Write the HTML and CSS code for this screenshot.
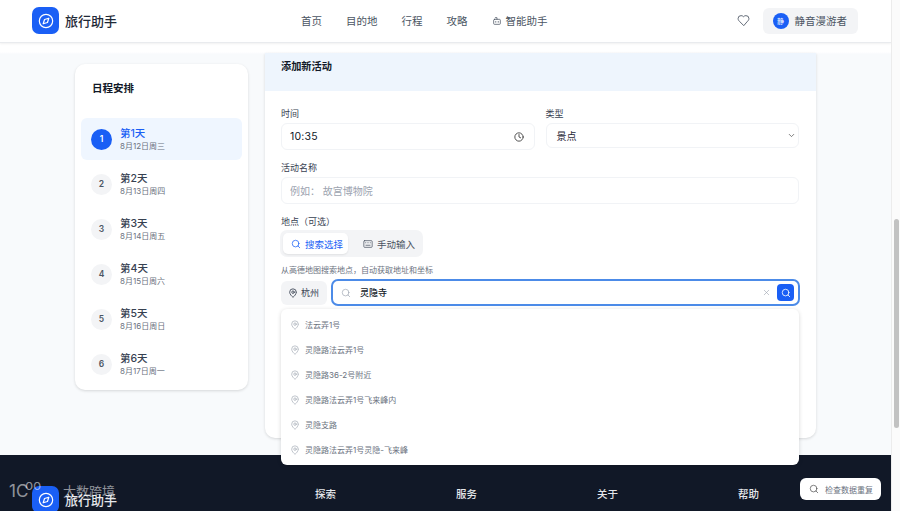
FILE: index.html
```html
<!DOCTYPE html>
<html lang="zh-CN">
<head>
    <meta charset="UTF-8">
    <meta name="viewport" content="width=device-width, initial-scale=1.0">
    <title>旅行助手</title>
    <link rel="stylesheet" href="styles.css">
</head>
<body>
    <svg class="icon-defs" width="0" height="0">
        <symbol id="i-search" viewBox="0 0 24 24"><circle cx="11" cy="11" r="8"/><path d="m21 21-4.3-4.3"/></symbol>
        <symbol id="i-pin" viewBox="0 0 24 24"><path d="M20 10c0 5-5.5 10.2-7.4 11.8a1 1 0 0 1-1.2 0C9.5 20.2 4 15 4 10a8 8 0 0 1 16 0"/><circle cx="12" cy="10" r="3"/></symbol>
        <symbol id="i-compass" viewBox="0 0 24 24"><circle cx="12" cy="12" r="10"/><path d="m16.2 7.8-2 6.4-6.4 2 2-6.4z"/></symbol>
    </svg>

    <div class="page">
        <header class="topbar">
            <div class="brand">
                <span class="brand-mark"><svg class="ico"><use href="#i-compass"/></svg></span>
                <span class="brand-name">旅行助手</span>
            </div>
            <nav class="nav">
                <a>首页</a>
                <a>目的地</a>
                <a>行程</a>
                <a>攻略</a>
                <a class="nav-ai">
                    <svg class="ico" viewBox="0 0 24 24"><path d="M12 8V4H8"/><rect x="4" y="8" width="16" height="12" rx="2"/><path d="M9 13v2"/><path d="M15 13v2"/></svg>
                    智能助手
                </a>
            </nav>
            <div class="top-right">
                <svg class="ico heart" viewBox="0 0 24 24"><path d="M19 14c1.49-1.46 3-3.21 3-5.5A5.5 5.5 0 0 0 16.5 3c-1.76 0-3 .5-4.5 2-1.5-1.5-2.74-2-4.5-2A5.5 5.5 0 0 0 2 8.5c0 2.3 1.5 4.05 3 5.5l7 7Z"/></svg>
                <div class="user">
                    <span class="avatar">静</span>
                    <span>静音漫游者</span>
                </div>
            </div>
        </header>

        <main class="content">
            <aside class="days">
                <h2>日程安排</h2>
                <div class="day active"><span class="num">1</span><div><b>第1天</b><small>8月12日周三</small></div></div>
                <div class="day"><span class="num">2</span><div><b>第2天</b><small>8月13日周四</small></div></div>
                <div class="day"><span class="num">3</span><div><b>第3天</b><small>8月14日周五</small></div></div>
                <div class="day"><span class="num">4</span><div><b>第4天</b><small>8月15日周六</small></div></div>
                <div class="day"><span class="num">5</span><div><b>第5天</b><small>8月16日周日</small></div></div>
                <div class="day"><span class="num">6</span><div><b>第6天</b><small>8月17日周一</small></div></div>
            </aside>

            <section class="panel">
                <div class="panel-head">添加新活动</div>
                <form class="form">
                    <div class="row">
                        <div class="field">
                            <label>时间</label>
                            <div class="input time">
                                <span>10:35</span>
                                <svg class="ico" viewBox="0 0 24 24"><circle cx="12" cy="12" r="10"/><path d="M12 6v6l4 2"/></svg>
                            </div>
                        </div>
                        <div class="field">
                            <label>类型</label>
                            <div class="input select">
                                <span>景点</span>
                                <svg class="ico" viewBox="0 0 24 24"><path d="m6 9 6 6 6-6"/></svg>
                            </div>
                        </div>
                    </div>
                    <div class="field">
                        <label>活动名称</label>
                        <div class="input name">例如： 故宫博物院</div>
                    </div>
                    <div class="field">
                        <label>地点（可选）</label>
                        <div class="tabs">
                            <span class="tab on"><svg class="ico"><use href="#i-search"/></svg>搜索选择</span>
                            <span class="tab">
                                <svg class="ico" viewBox="0 0 24 24"><rect x="2" y="4" width="20" height="16" rx="2"/><path d="M7 15h10"/><path d="M6 9h.01M10 9h.01M14 9h.01M18 9h.01"/></svg>
                                手动输入
                            </span>
                        </div>
                        <p class="hint">从高德地图搜索地点，自动获取地址和坐标</p>
                        <div class="search-row">
                            <span class="city"><svg class="ico"><use href="#i-pin"/></svg>杭州</span>
                            <div class="search">
                                <svg class="ico s-glass"><use href="#i-search"/></svg>
                                <span class="s-text">灵隐寺</span>
                                <svg class="ico s-clear" viewBox="0 0 24 24"><path d="M18 6 6 18M6 6l12 12"/></svg>
                                <span class="s-btn"><svg class="ico"><use href="#i-search"/></svg></span>
                            </div>
                            <ul class="results">
                                <li><svg class="ico"><use href="#i-pin"/></svg>法云弄1号</li>
                                <li><svg class="ico"><use href="#i-pin"/></svg>灵隐路法云弄1号</li>
                                <li><svg class="ico"><use href="#i-pin"/></svg>灵隐路36-2号附近</li>
                                <li><svg class="ico"><use href="#i-pin"/></svg>灵隐路法云弄1号飞来峰内</li>
                                <li><svg class="ico"><use href="#i-pin"/></svg>灵隐支路</li>
                                <li><svg class="ico"><use href="#i-pin"/></svg>灵隐路法云弄1号灵隐-飞来峰</li>
                            </ul>
                        </div>
                    </div>
                </form>
            </section>
        </main>

        <footer class="footer">
            <div class="brand">
                <span class="brand-mark"><svg class="ico"><use href="#i-compass"/></svg></span>
                <span class="brand-name">旅行助手</span>
            </div>
            <span class="f-col">探索</span>
            <span class="f-col">服务</span>
            <span class="f-col">关于</span>
            <span class="f-col">帮助</span>
        </footer>

        <div class="watermark"><span class="wm-logo">1C<sup>oo</sup></span><span>大数跨境</span></div>
        <button class="check"><svg class="ico"><use href="#i-search"/></svg>检查数据重复</button>
    </div>

    <div class="scrollbar"><div class="thumb"></div></div>
</body>
</html>
```

FILE: styles.css
```css
:root {
    --blue: #1a5ff5;
    --dark: #111827;
    --text: #1f2937;
    --muted: #6b7280;
    --line: #f1f3f6;
    --font: "Inter", "Noto Sans CJK SC", sans-serif;
}

* {
    box-sizing: border-box;
    margin: 0;
    padding: 0;
    font-family: var(--font);
}

html, body {
    height: 511px;
    overflow: hidden;
}

body {
    display: flex;
    background-color: #fff;
    color: var(--text);
}

.icon-defs {
    position: absolute;
}

.ico {
    display: block;
    width: 12px;
    height: 12px;
    fill: none;
    stroke: currentColor;
    stroke-width: 2;
    stroke-linecap: round;
    stroke-linejoin: round;
    flex-shrink: 0;
}

.page {
    position: relative;
    flex: 1;
    min-width: 0;
    display: flex;
    flex-direction: column;
    height: 511px;
    overflow: hidden;
    background-color: #f8fafc;
}

.scrollbar {
    width: 9px;
    background-color: #fbfbfb;
    border-left: 1px solid #ececec;
    padding: 219px 1px 0 2px;
}

.thumb {
    height: 209px;
    background-color: #c2c2c2;
    border-radius: 3px;
}

/* header */
.topbar {
    position: relative;
    z-index: 2;
    flex: 0 0 43px;
    display: flex;
    align-items: center;
    padding: 0 33px 1px 32px;
    background-color: #fff;
    border-bottom: 1px solid #e9ebee;
    box-shadow: 0 1px 2px rgba(0, 0, 0, 0.06);
}

.brand {
    display: flex;
    align-items: center;
    gap: 6px;
}

.brand-mark {
    display: flex;
    align-items: center;
    justify-content: center;
    width: 27px;
    height: 27px;
    border-radius: 7px;
    background-color: var(--blue);
    color: #fff;
}

.brand-mark .ico {
    width: 16px;
    height: 16px;
    stroke-width: 1.8;
}

.brand-name {
    font-size: 13px;
    font-weight: 500;
}

.nav {
    display: flex;
    align-items: center;
    gap: 24px;
    margin-left: 184px;
    font-size: 10.5px;
    color: #4b5563;
}

.nav-ai {
    display: flex;
    align-items: center;
    gap: 4px;
}

.nav-ai .ico {
    width: 10px;
    height: 10px;
    stroke-width: 1.8;
}

.top-right {
    margin-left: auto;
    display: flex;
    align-items: center;
    gap: 13px;
    color: #4b5563;
}

.heart {
    width: 13px;
    height: 13px;
    stroke-width: 1.6;
}

.user {
    display: flex;
    align-items: center;
    gap: 6px;
    height: 26px;
    padding: 0 11px 0 10px;
    border-radius: 6px;
    background-color: #f3f4f6;
    font-size: 10.5px;
}

.avatar {
    display: flex;
    align-items: center;
    justify-content: center;
    width: 16px;
    height: 16px;
    border-radius: 50%;
    background-color: var(--blue);
    color: #fff;
    font-size: 7px;
}

/* main area */
.content {
    flex: 0 0 412px;
    display: flex;
    align-items: flex-start;
    gap: 17px;
    padding: 10px 0 0 75px;
    background: linear-gradient(#fff 9px, #f8fafc 11px);
}

.days {
    width: 173px;
    height: 326px;
    margin-top: 11px;
    padding: 0 6px;
    background-color: #fff;
    border-radius: 10px;
    box-shadow: 0 1px 3px rgba(0, 0, 0, 0.14);
}

.days h2 {
    padding: 16px 11px 0;
    height: 54px;
    font-size: 10.5px;
    font-weight: 600;
    color: #111827;
}

.day {
    display: flex;
    align-items: center;
    gap: 8px;
    height: 42px;
    margin-bottom: 3px;
    padding-left: 10px;
    border-radius: 6px;
    color: #374151;
}

.day.active {
    background-color: #eff6ff;
}

.num {
    display: flex;
    align-items: center;
    justify-content: center;
    width: 21px;
    height: 21px;
    border-radius: 50%;
    background-color: #f3f4f6;
    color: #4b5563;
    font-size: 8.5px;
    font-weight: 600;
}

.active .num {
    background-color: var(--blue);
    color: #fff;
}

.day b {
    display: block;
    font-size: 10.5px;
    line-height: 14px;
    font-weight: 500;
}

.active b {
    color: var(--blue);
}

.day small {
    display: block;
    font-size: 8px;
    line-height: 11px;
    color: var(--muted);
}

.panel {
    width: 551px;
    height: 385px;
    background-color: #fff;
    border-radius: 0 0 10px 10px;
    box-shadow: 0 1px 3px rgba(0, 0, 0, 0.14);
}

.panel-head {
    height: 38px;
    padding: 6px 16px 0;
    background-color: #eef5fd;
    font-size: 10.2px;
    font-weight: 600;
    line-height: 15px;
    color: #111827;
}

.form {
    padding: 15px 17px 0 16px;
}

.form > .row {
    margin-bottom: 10px;
}

.row {
    display: flex;
    gap: 11px;
    align-items: flex-start;
}

.row .field {
    flex: 1;
}

.field label {
    display: block;
    height: 17px;
    font-size: 9px;
    line-height: 15px;
    color: #374151;
}

.input {
    display: flex;
    align-items: center;
    justify-content: space-between;
    padding: 0 8px;
    border: 1px solid var(--line);
    border-radius: 6px;
    background-color: #fff;
    font-size: 10px;
}

.time {
    height: 27px;
    padding-right: 10px;
    color: #111827;
}

.time span {
    font-size: 10.5px;
    letter-spacing: 0.2px;
}

.time .ico {
    width: 10px;
    height: 10px;
    color: #333;
}

.select {
    height: 25px;
    margin-bottom: 2px;
    padding: 0 2px 0 10px;
    font-size: 10px;
}

.select .ico {
    width: 9px;
    height: 9px;
    color: #555;
}

.name {
    height: 27px;
    margin-bottom: 10px;
    color: #9ca3af;
}

.tabs {
    display: inline-flex;
    gap: 7px;
    height: 27px;
    padding: 3px;
    margin: -1px 0 0 -1px;
    border-radius: 7px;
    background-color: #f3f4f6;
    font-size: 9.5px;
    color: #4b5563;
}

.tab {
    display: flex;
    align-items: center;
    gap: 4px;
    padding: 0 5px 0 8px;
    border-radius: 5px;
}

.tab .ico {
    width: 10px;
    height: 10px;
    stroke-width: 1.8;
}

.tab.on {
    background-color: #fff;
    color: var(--blue);
    box-shadow: 0 1px 2px rgba(0, 0, 0, 0.08);
}

.hint {
    height: 12px;
    margin: 7px 0 3px;
    font-size: 8px;
    line-height: 12px;
    color: var(--muted);
}

.search-row {
    position: relative;
    display: flex;
    align-items: center;
    gap: 4px;
    height: 27px;
}

.city {
    display: flex;
    align-items: center;
    gap: 3px;
    width: 46px;
    height: 24px;
    padding-left: 7px;
    border-radius: 6px;
    background-color: #f3f4f6;
    font-size: 9px;
    color: #374151;
}

.city .ico {
    width: 10px;
    height: 10px;
}

.search {
    flex: 1;
    display: flex;
    align-items: center;
    height: 27px;
    margin-right: -1px;
    padding: 0 4px 0 8px;
    border: 2px solid #4c8be8;
    border-radius: 7px;
    background-color: #fff;
}

.s-glass {
    width: 10px;
    height: 10px;
    color: #9ca3af;
    stroke-width: 1.6;
}

.s-text {
    margin-left: 9px;
    font-size: 9px;
    font-weight: 500;
    color: #111827;
}

.s-clear {
    margin-left: auto;
    width: 9px;
    height: 9px;
    color: #9ca3af;
    stroke-width: 1.6;
}

.s-btn {
    display: flex;
    align-items: center;
    justify-content: center;
    width: 17px;
    height: 17px;
    margin-left: 6px;
    border-radius: 4px;
    background-color: var(--blue);
    color: #fff;
}

.s-btn .ico {
    width: 10px;
    height: 10px;
}

.results {
    position: absolute;
    z-index: 3;
    left: 0;
    top: 30px;
    width: 518px;
    height: 156px;
    padding-top: 3px;
    list-style: none;
    background-color: #fff;
    border-radius: 6px;
    box-shadow: 0 1px 4px rgba(0, 0, 0, 0.16);
}

.results li {
    display: flex;
    align-items: center;
    gap: 5px;
    height: 25px;
    padding-left: 9px;
    font-size: 8px;
    color: #6b7280;
}

.results .ico {
    width: 10px;
    height: 10px;
    stroke-width: 1.5;
    color: #9ca3af;
}

/* footer */
.footer {
    flex: 1;
    display: flex;
    align-items: flex-start;
    padding: 31px 0 0 32px;
    background-color: var(--dark);
    color: #fff;
}

.footer .brand {
    width: 283px;
}

.footer .brand-name {
    color: #e5e7eb;
}

.f-col {
    width: 141px;
    margin-top: 2px;
    font-size: 10.5px;
    font-weight: 500;
    line-height: 14px;
    color: #e5e7eb;
}

.watermark {
    position: absolute;
    left: 9px;
    top: 481px;
    display: flex;
    align-items: flex-start;
    gap: 1px;
    font-size: 13px;
    line-height: 20px;
    color: rgba(255, 255, 255, 0.55);
}

.wm-logo {
    width: 53px;
    font-size: 17px;
    font-weight: 400;
}

.wm-logo sup {
    margin-left: -3px;
    font-size: 13px;
    line-height: 0;
}

.check {
    position: absolute;
    left: 800px;
    top: 478px;
    width: 81px;
    height: 22px;
    display: flex;
    align-items: center;
    gap: 6px;
    padding-left: 9px;
    border: none;
    border-radius: 6px;
    background-color: #fff;
    font-size: 8px;
    color: #6b7280;
}

.check .ico {
    width: 10px;
    height: 10px;
    color: #444;
    stroke-width: 1.6;
}
```
